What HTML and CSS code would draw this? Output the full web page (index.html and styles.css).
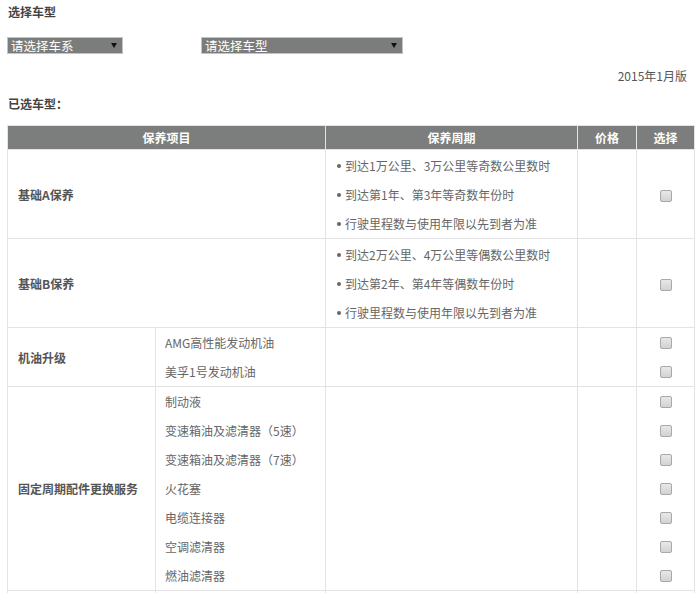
FILE: index.html
```html
<!DOCTYPE html>
<html lang="zh-CN">
<head>
<meta charset="utf-8">
<title>保养项目</title>
<link rel="stylesheet" href="styles.css">
</head>
<body>
<div class="page">
  <div class="title">选择车型</div>
  <div class="selects">
    <div class="select sel-series"><span>请选择车系</span><i class="arrow"></i></div>
    <div class="select sel-model"><span>请选择车型</span><i class="arrow"></i></div>
  </div>
  <div class="version">2015年1月版</div>
  <div class="title chosen">已选车型：</div>
  <table class="grid">
    <colgroup>
      <col class="c-label"><col class="c-sub"><col class="c-period"><col class="c-price"><col class="c-pick">
    </colgroup>
    <thead>
      <tr><th colspan="2">保养项目</th><th>保养周期</th><th>价格</th><th>选择</th></tr>
    </thead>
    <tbody>
      <tr>
        <td colspan="2" class="label">基础A保养</td>
        <td class="period">
          <div class="line"><span class="dot"></span>到达1万公里、3万公里等奇数公里数时</div>
          <div class="line"><span class="dot"></span>到达第1年、第3年等奇数年份时</div>
          <div class="line"><span class="dot"></span>行驶里程数与使用年限以先到者为准</div>
        </td>
        <td></td>
        <td class="pick"><input type="checkbox" class="cb"></td>
      </tr>
      <tr>
        <td colspan="2" class="label">基础B保养</td>
        <td class="period">
          <div class="line"><span class="dot"></span>到达2万公里、4万公里等偶数公里数时</div>
          <div class="line"><span class="dot"></span>到达第2年、第4年等偶数年份时</div>
          <div class="line"><span class="dot"></span>行驶里程数与使用年限以先到者为准</div>
        </td>
        <td></td>
        <td class="pick"><input type="checkbox" class="cb"></td>
      </tr>
      <tr>
        <td class="label">机油升级</td>
        <td class="sub">
          <div class="line">AMG高性能发动机油</div>
          <div class="line">美孚1号发动机油</div>
        </td>
        <td></td>
        <td></td>
        <td class="pick">
          <div class="line"><input type="checkbox" class="cb"></div>
          <div class="line"><input type="checkbox" class="cb"></div>
        </td>
      </tr>
      <tr>
        <td class="label">固定周期配件更换服务</td>
        <td class="sub">
          <div class="line">制动液</div>
          <div class="line">变速箱油及滤清器（5速）</div>
          <div class="line">变速箱油及滤清器（7速）</div>
          <div class="line">火花塞</div>
          <div class="line">电缆连接器</div>
          <div class="line">空调滤清器</div>
          <div class="line">燃油滤清器</div>
        </td>
        <td></td>
        <td></td>
        <td class="pick">
          <div class="line"><input type="checkbox" class="cb"></div>
          <div class="line"><input type="checkbox" class="cb"></div>
          <div class="line"><input type="checkbox" class="cb"></div>
          <div class="line"><input type="checkbox" class="cb"></div>
          <div class="line"><input type="checkbox" class="cb"></div>
          <div class="line"><input type="checkbox" class="cb"></div>
          <div class="line"><input type="checkbox" class="cb"></div>
        </td>
      </tr>
      <tr class="more">
        <td></td><td></td><td></td><td></td><td></td>
      </tr>
    </tbody>
  </table>
</div>
</body>
</html>
```

FILE: styles.css
```css
html, body {
  margin: 0;
  padding: 0;
  background: #fff;
}
body {
  font-family: "Noto Sans CJK SC", "Liberation Sans", sans-serif;
  font-size: 12px;
  color: #555;
}
.page {
  padding: 0 6px 0 7px;
}
.title {
  font-weight: bold;
  color: #444;
  line-height: 24px;
  padding-left: 1px;
}
.selects {
  display: flex;
  gap: 78px;
  margin-top: 13px;
}
.select {
  box-sizing: border-box;
  height: 17px;
  background: #7b7d7c;
  border: 1px solid #c4c4c4;
  color: #fff;
  display: flex;
  align-items: center;
  justify-content: space-between;
  padding: 0 5px 0 3px;
  font-size: 12.5px;
  line-height: 15px;
}
.sel-series { width: 116px; }
.sel-model { width: 202px; }
.arrow {
  width: 0;
  height: 0;
  border-left: 3px solid transparent;
  border-right: 3px solid transparent;
  border-top: 5px solid #111;
}
.version {
  text-align: right;
  line-height: 20px;
  margin-top: 12px;
  padding-right: 7px;
  color: #555;
}
.chosen {
  margin-top: 6px;
  line-height: 24px;
}
.grid {
  margin-top: 9px;
  width: 687px;
  border-collapse: collapse;
  table-layout: fixed;
  border: 1px solid #e3e3e3;
}
.c-label { width: 148px; }
.c-sub { width: 170px; }
.c-period { width: 252px; }
.c-price { width: 59px; }
.c-pick { width: 58px; }
.grid th {
  background: #7b7e7d;
  color: #fff;
  font-weight: bold;
  height: 23px;
  padding: 0;
  border: 1px solid #e3e3e3;
  text-align: center;
}
.grid td {
  border: 1px solid #e3e3e3;
  padding: 0;
  vertical-align: middle;
}
.grid td.label {
  padding-left: 10px;
  font-weight: bold;
  color: #555;
}
.grid td.sub {
  padding-left: 9px;
  color: #666;
}
.grid td.period {
  padding: 1px 0 0 11px;
  color: #666;
}
.line {
  height: 29px;
  line-height: 29px;
  white-space: nowrap;
}
.period .line {
  display: flex;
  align-items: center;
}
.dot {
  width: 4px;
  height: 4px;
  border-radius: 50%;
  background: #666;
  margin-right: 4px;
  flex: none;
}
.pick {
  text-align: center;
}
.pick .line {
  display: flex;
  align-items: center;
  justify-content: center;
}
.more td {
  height: 29px;
}
.cb {
  appearance: none;
  -webkit-appearance: none;
  margin: 0;
  width: 12px;
  height: 12px;
  border: 1px solid #a9a9a9;
  border-radius: 2px;
  background: linear-gradient(#e8e8e8, #d2d2d2);
  box-sizing: border-box;
  vertical-align: middle;
}
```
